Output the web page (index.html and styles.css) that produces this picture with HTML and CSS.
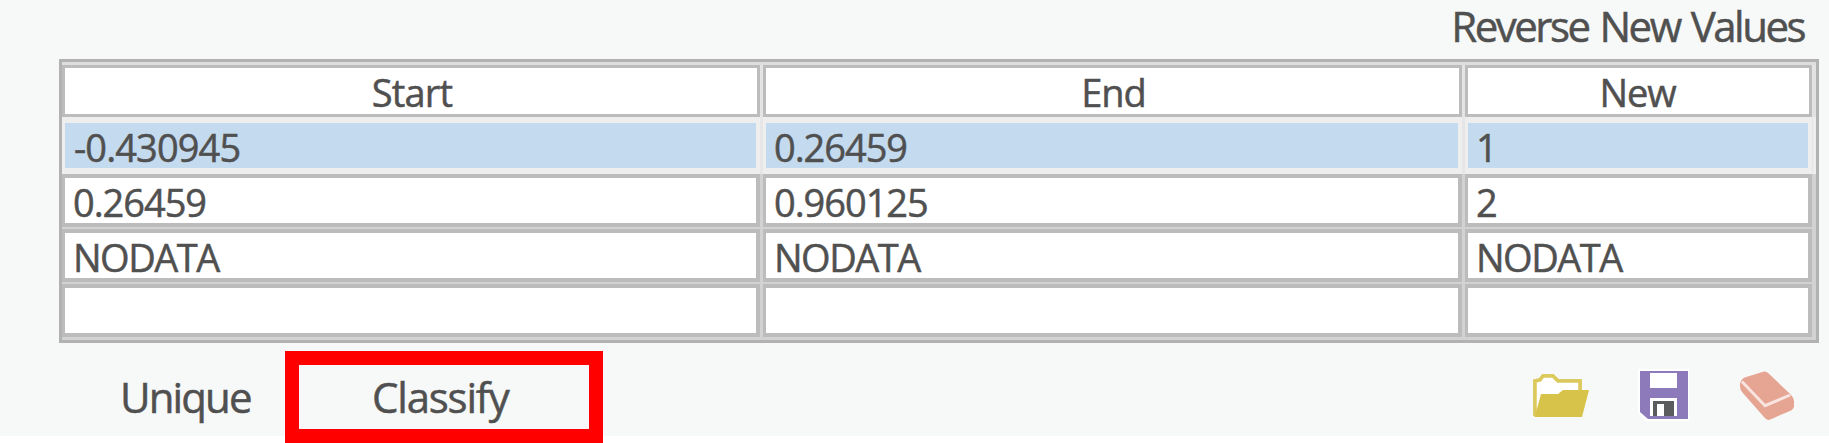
FILE: index.html
```
<!DOCTYPE html>
<html lang="en">
<head>
<meta charset="utf-8">
<title>Reclassification</title>
<link rel="stylesheet" href="styles.css">
</head>
<body>
<main class="panel">
  <header class="top"><span class="label reverse">Reverse New Values</span></header>
  <section class="table">
    <div class="row head"><div class="cell"><span class="h-start">Start</span></div><div class="cell"><span class="h-end">End</span></div><div class="cell"><span class="h-new">New</span></div></div>
    <div class="row selected"><div class="cell"><span class="negative">-0.430945</span></div><div class="cell"><span>0.26459</span></div><div class="cell"><span>1</span></div></div>
    <div class="row"><div class="cell"><span>0.26459</span></div><div class="cell"><span>0.960125</span></div><div class="cell"><span>2</span></div></div>
    <div class="row"><div class="cell"><span class="nodata">NODATA</span></div><div class="cell"><span class="nodata">NODATA</span></div><div class="cell"><span class="nodata">NODATA</span></div></div>
    <div class="row"><div class="cell"></div><div class="cell"></div><div class="cell"></div></div>
  </section>
  <footer class="actions">
    <div class="unique"><span class="label t-unique">Unique</span></div>
    <div class="classify"><span class="label t-classify">Classify</span></div>
    <div class="icons">
      <svg width="56" height="52" viewBox="0 0 56 52">
        <path d="M2 46V11L7 10L10 6H20L25 11H47V20" fill="#fff" stroke="#dcc95c" stroke-width="3.5"/>
        <path d="M2 11V46L8 24H28L32 20H48V11H25L20 6H10L7 10Z" fill="#fff"/>
        <path d="M2 46V11L7 10L10 6H20L25 11H47V20" fill="none" stroke="#dcc95c" stroke-width="3.5"/>
        <path d="M2 46L8 24H25L30 20H56L49 47H1Z" fill="#d8c34a"/>
      </svg>
      <svg width="58" height="58" viewBox="-4 -4 58 58">
        <path d="M-1 -1H50V51H7L-1 43Z" fill="#fff"/>
        <path d="M1 1H49V49H9L1 42Z" fill="#8d7abb"/>
        <path d="M11 3H38V18H11ZM11 28H38V46H11Z" fill="#fff"/>
        <path d="M14 31H35V46H14Z" fill="#5a5c5d"/>
        <path d="M18 34H25V46H18Z" fill="#fff"/>
      </svg>
      <svg width="56" height="52" viewBox="0 0 58 52">
        <path d="M5 7L25 1Q28 0 31 3L53 24Q57 28 57 32V37Q57 39 54 41L33 50Q30 52 27 49L4 23Q1 20 1 16V13Q2 9 5 7Z" fill="#e6a593"/>
        <path d="M3 11L27 36L53 25" fill="none" stroke="#f8e5e0" stroke-width="3"/>
      </svg>
    </div>
  </footer>
</main>
</body>
</html>
```
FILE: styles.css
```
* { box-sizing: border-box; }
body { margin: 0; height: 443px; background: #fff; color: #505050; font-family: "Open Sans", sans-serif; font-size: 38px; -webkit-text-stroke: 0.5px #505050; }
.panel { height: 436px; background: #f7f9f9; display: flex; flex-direction: column; }
.top { height: 59px; display: flex; justify-content: flex-end; padding-right: 25px; flex: none; }
.label { font-size: 42px; line-height: 52px; white-space: nowrap; }
.reverse { letter-spacing: -2.5px; word-spacing: 2.5px; }
.table { margin: 0 10px 0 59px; width: 1760px; height: 284px; flex: none; border: 3px solid #b2b2b2; background: #d2d2d2; padding: 3px 3px 3px 0; display: flex; flex-direction: column; gap: 2px; }
.row { display: grid; grid-template-columns: 698px 699px 347px; grid-template-rows: 100%; column-gap: 3px; height: 53px; flex: none; }
.cell { background: #fff; border: 4px solid #bcbcbc; border-left-width: 3px; padding-left: 8px; line-height: 49px; white-space: nowrap; letter-spacing: -1.05px; }
.head { height: 52px; margin-bottom: -2px; box-shadow: 3px 0 #e2e2e2, 0 -3px #dedede, 3px -3px #dedede; background: #e4e4e4; }
.head .cell { text-align: center; padding: 0 0 0 2px; line-height: 48px; border-width: 3px; }
.head .cell:last-child { padding: 0 2px 0 0; }
.h-start { letter-spacing: -0.8px; }
.selected { height: 57px; margin-bottom: -2px; background: #e6e6e6; box-shadow: 3px 0 #eee; }
.selected .cell { background: #c4daee; border: solid #eee; border-width: 6px 4px 6px 3px; line-height: 49px; }
.negative { margin-left: 1px; letter-spacing: -0.9px; }
.nodata { letter-spacing: -1.5px; }
.actions { display: flex; height: 100px; flex: none; padding-top: 8px; }
.unique { width: 285px; padding: 20px 0 0 120px; }
.classify { width: 318px; height: 92px; border: 14px solid #f00; background: #f7f9f9; padding: 6px 0 0 73px; }
.t-unique { letter-spacing: -1.9px; }
.t-classify { letter-spacing: -1.2px; }
.icons { display: flex; align-items: flex-start; margin-left: 930px; gap: 46px; padding-top: 19px; }
.icons svg { flex: none; }
.icons svg:nth-child(2) { margin-top: -4px; }
```
